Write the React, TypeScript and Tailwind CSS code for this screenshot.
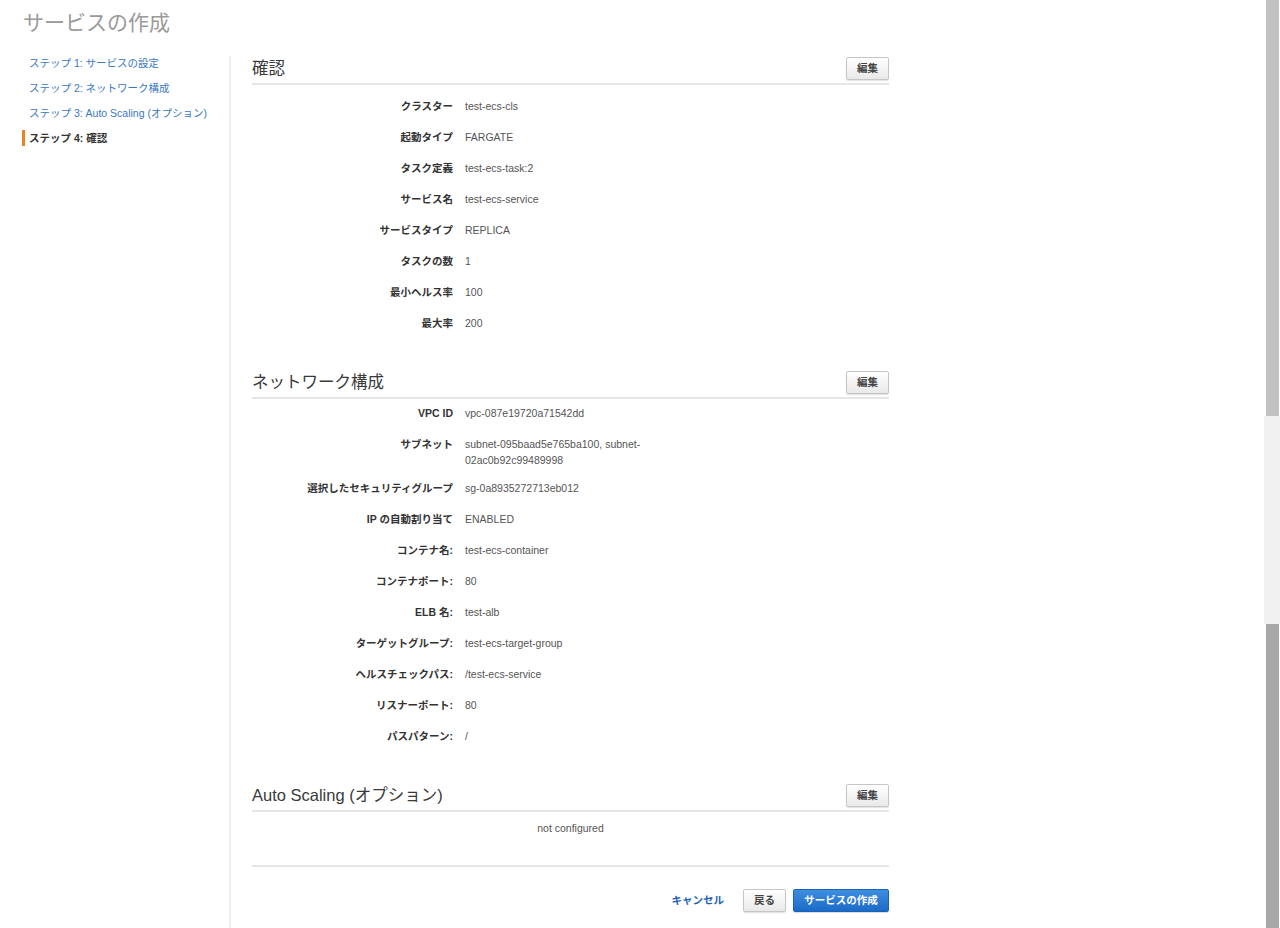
import React from 'react';

const font = { fontFamily: '"Liberation Sans", "Noto Sans CJK JP", sans-serif' };

type Row = { label: string; value: string; pad?: string };

const review: Row[] = [
  { label: 'クラスター', value: 'test-ecs-cls' },
  { label: '起動タイプ', value: 'FARGATE' },
  { label: 'タスク定義', value: 'test-ecs-task:2' },
  { label: 'サービス名', value: 'test-ecs-service' },
  { label: 'サービスタイプ', value: 'REPLICA' },
  { label: 'タスクの数', value: '1' },
  { label: '最小ヘルス率', value: '100' },
  { label: '最大率', value: '200' },
];

const network: Row[] = [
  { label: 'VPC ID', value: 'vpc-087e19720a71542dd' },
  { label: 'サブネット', value: 'subnet-095baad5e765ba100, subnet-02ac0b92c99489998', pad: 'pb-[12px]' },
  { label: '選択したセキュリティグループ', value: 'sg-0a8935272713eb012' },
  { label: 'IP の自動割り当て', value: 'ENABLED' },
  { label: 'コンテナ名:', value: 'test-ecs-container' },
  { label: 'コンテナポート:', value: '80' },
  { label: 'ELB 名:', value: 'test-alb' },
  { label: 'ターゲットグループ:', value: 'test-ecs-target-group' },
  { label: 'ヘルスチェックパス:', value: '/test-ecs-service' },
  { label: 'リスナーポート:', value: '80' },
  { label: 'パスパターン:', value: '/' },
];

function EditButton() {
  return (
    <button className="h-[23px] w-[43px] rounded-[2px] border border-[#c6c6c6] bg-gradient-to-b from-[#ffffff] to-[#e9e9e9] text-[10.5px] font-bold text-[#444] shadow-[0_1px_1px_rgba(0,0,0,0.12)]">
      編集
    </button>
  );
}

function SectionHeader({ title }: { title: string }) {
  return (
    <div className="flex items-center justify-between border-b-2 border-[#e6e6e6] pb-[3px]">
      <h2 className="text-[16.5px] leading-[23px] text-[#3a3a3a]">{title}</h2>
      <EditButton />
    </div>
  );
}

function Rows({ rows }: { rows: Row[] }) {
  return (
    <div className="flex flex-col">
      {rows.map((r) => (
        <div key={r.label} className={`flex text-[10.5px] leading-[16px] ${r.pad ?? 'pb-[15px]'}`}>
          <div className="w-[201px] shrink-0 text-right font-bold text-[#333]">{r.label}</div>
          <div className="ml-[12px] w-[180px] text-[#555]">{r.value}</div>
        </div>
      ))}
    </div>
  );
}

function Steps() {
  const steps = [
    'ステップ 1: サービスの設定',
    'ステップ 2: ネットワーク構成',
    'ステップ 3: Auto Scaling (オプション)',
  ];
  return (
    <nav className="w-[207px] shrink-0 whitespace-nowrap text-[10.5px] leading-[16px]">
      {steps.map((s) => (
        <div key={s} className="flex h-[25px] items-center">
          <span className="border-l-[3px] border-transparent pl-[4px] text-[#3b78c4]">{s}</span>
        </div>
      ))}
      <div className="flex h-[25px] items-center">
        <span className="border-l-[3px] border-[#e8871e] pl-[4px] font-bold text-[#333]">ステップ 4: 確認</span>
      </div>
    </nav>
  );
}

export default function App() {
  return (
    <div className="flex h-[928px] overflow-hidden bg-white" style={font}>
      <div className="flex-1">
        <h1 className="pl-[23px] pt-[8px] text-[21px] leading-[30px] text-[#9a9a9a]">サービスの作成</h1>
        <div className="mt-[12px] flex items-start pl-[22px]">
          <Steps />
          <div className="mt-[6px] h-[884px] w-[2px] shrink-0 bg-[#eeeeee]" />
          <div className="flex w-[637px] flex-col pl-0 pt-[7px] ml-[21px]">
            <SectionHeader title="確認" />
            <div className="mt-[13px]">
              <Rows rows={review} />
            </div>

            <div className="mt-[25px]">
              <SectionHeader title="ネットワーク構成" />
              <div className="mt-[6px]">
                <Rows rows={network} />
              </div>
            </div>

            <div className="mt-[25px]">
              <SectionHeader title="Auto Scaling (オプション)" />
              <div className="mt-[8px] text-center text-[10.5px] leading-[16px] text-[#555]">not configured</div>
            </div>

            <div className="mt-[29px] border-t-2 border-[#e6e6e6]" />

            <div className="mt-[22px] flex items-center justify-end">
              <a className="text-[10.5px] font-bold text-[#1f63b5]">キャンセル</a>
              <button className="ml-[19px] h-[23px] w-[43px] rounded-[2px] border border-[#c6c6c6] bg-gradient-to-b from-[#ffffff] to-[#e9e9e9] text-[10.5px] font-bold text-[#444] shadow-[0_1px_1px_rgba(0,0,0,0.12)]">
                戻る
              </button>
              <button className="ml-[7px] h-[23px] w-[96px] rounded-[2px] border border-[#1a62b8] bg-gradient-to-b from-[#3d8ee0] to-[#1b6ac6] text-[10.5px] font-bold text-white shadow-[0_1px_1px_rgba(0,0,0,0.15)]">
                サービスの作成
              </button>
            </div>
          </div>
        </div>
      </div>

      {/* scrollbar strip */}
      <div className="flex w-[16px] shrink-0 flex-col">
        <div className="flex h-[416px] justify-center bg-white">
          <div className="ml-[1px] w-[13px] bg-[#c1c1c1]" />
        </div>
        <div className="h-[208px] bg-[#f0f0f0]" />
        <div className="flex flex-1 justify-center bg-white">
          <div className="ml-[1px] w-[13px] bg-[#a8a8a8]" />
        </div>
      </div>
    </div>
  );
}
